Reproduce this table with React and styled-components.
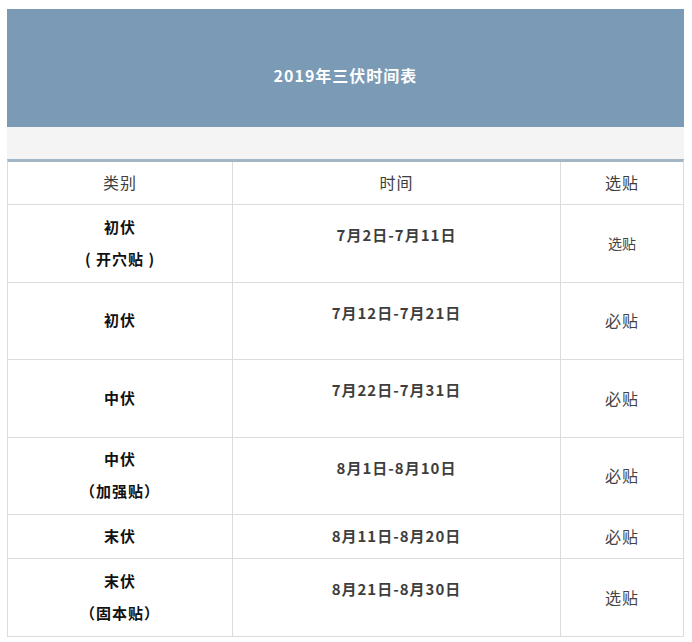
import React from 'react'
import styled, { createGlobalStyle } from 'styled-components'

const GlobalStyle = createGlobalStyle`
	body {
		margin: 0;
		background: #fff;
		font-family: 'Noto Sans CJK SC', 'Noto Sans', sans-serif;
	}
`

// données du tableau
const rows = [
	{ type: ['初伏', '( 开穴贴 )'], date: '7月2日-7月11日', tag: '选贴', small: true, h: 78, lift: true },
	{ type: ['初伏'], date: '7月12日-7月21日', tag: '必贴', h: 77, lift: true },
	{ type: ['中伏'], date: '7月22日-7月31日', tag: '必贴', h: 78, lift: true },
	{ type: ['中伏', '（加强贴）'], date: '8月1日-8月10日', tag: '必贴', h: 77, lift: true },
	{ type: ['末伏'], date: '8月11日-8月20日', tag: '必贴', h: 44 },
	{ type: ['末伏', '（固本贴）'], date: '8月21日-8月30日', tag: '选贴', h: 78, lift: true }
]

const App = () => {
	return (
		<>
			<GlobalStyle />
			<Page>
				<Banner>2019年三伏时间表</Banner>
				<Band />
				<Table>
					<Row h={43}>
						<HeadCell>类别</HeadCell>
						<HeadCell>时间</HeadCell>
						<HeadCell>选贴</HeadCell>
					</Row>
					{rows.map((r, i) => (
						<Row key={i} h={r.h}>
							<TypeCell>
								{r.type.map((t, j) => (
									<span key={j}>{t}</span>
								))}
							</TypeCell>
							<DateCell lift={r.lift}>{r.date}</DateCell>
							<TagCell small={r.small}>{r.tag}</TagCell>
						</Row>
					))}
				</Table>
			</Page>
		</>
	)
}

const Page = styled.div`
	width: 677px;
	padding: 9px 0 0 7px;
`

const Banner = styled.div`
	height: 118px;
	background: #7a9ab5;
	color: #fff;
	font-size: 16px;
	font-weight: 700;
	letter-spacing: 1px;
	display: flex;
	align-items: center;
	justify-content: center;
	padding-top: 13px;
	box-sizing: border-box;
`

const Band = styled.div`
	height: 32px;
	background: #f4f4f4;
`

const Table = styled.div`
	border-top: 3px solid #a1b5c5;
	border-left: 1px solid #dcdcdc;
	border-right: 1px solid #dcdcdc;
`

const Row = styled.div`
	display: grid;
	grid-template-columns: 224px 328px 123px;
	height: ${p => p.h}px;
	box-sizing: border-box;
	border-bottom: 1px solid #dcdcdc;
`

const Cell = styled.div`
	display: flex;
	flex-direction: column;
	align-items: center;
	justify-content: center;
	letter-spacing: 1px;
	padding-bottom: 2px;
	& + & {
		border-left: 1px solid #dcdcdc;
	}
`

const HeadCell = styled(Cell)`
	font-size: 16px;
	color: #3e3e3e;
`

const TypeCell = styled(Cell)`
	font-size: 15px;
	font-weight: 700;
	color: #111;
	line-height: 32px;
	white-space: pre;
`

const DateCell = styled(Cell)`
	font-size: 15px;
	font-weight: 700;
	color: #3e3e3e;
	padding-bottom: ${p => (p.lift ? 18 : 2)}px;
`

const TagCell = styled(Cell)`
	font-size: ${p => (p.small ? 14 : 16)}px;
	letter-spacing: ${p => (p.small ? 0 : 1)}px;
	color: #444;
`

export default App
